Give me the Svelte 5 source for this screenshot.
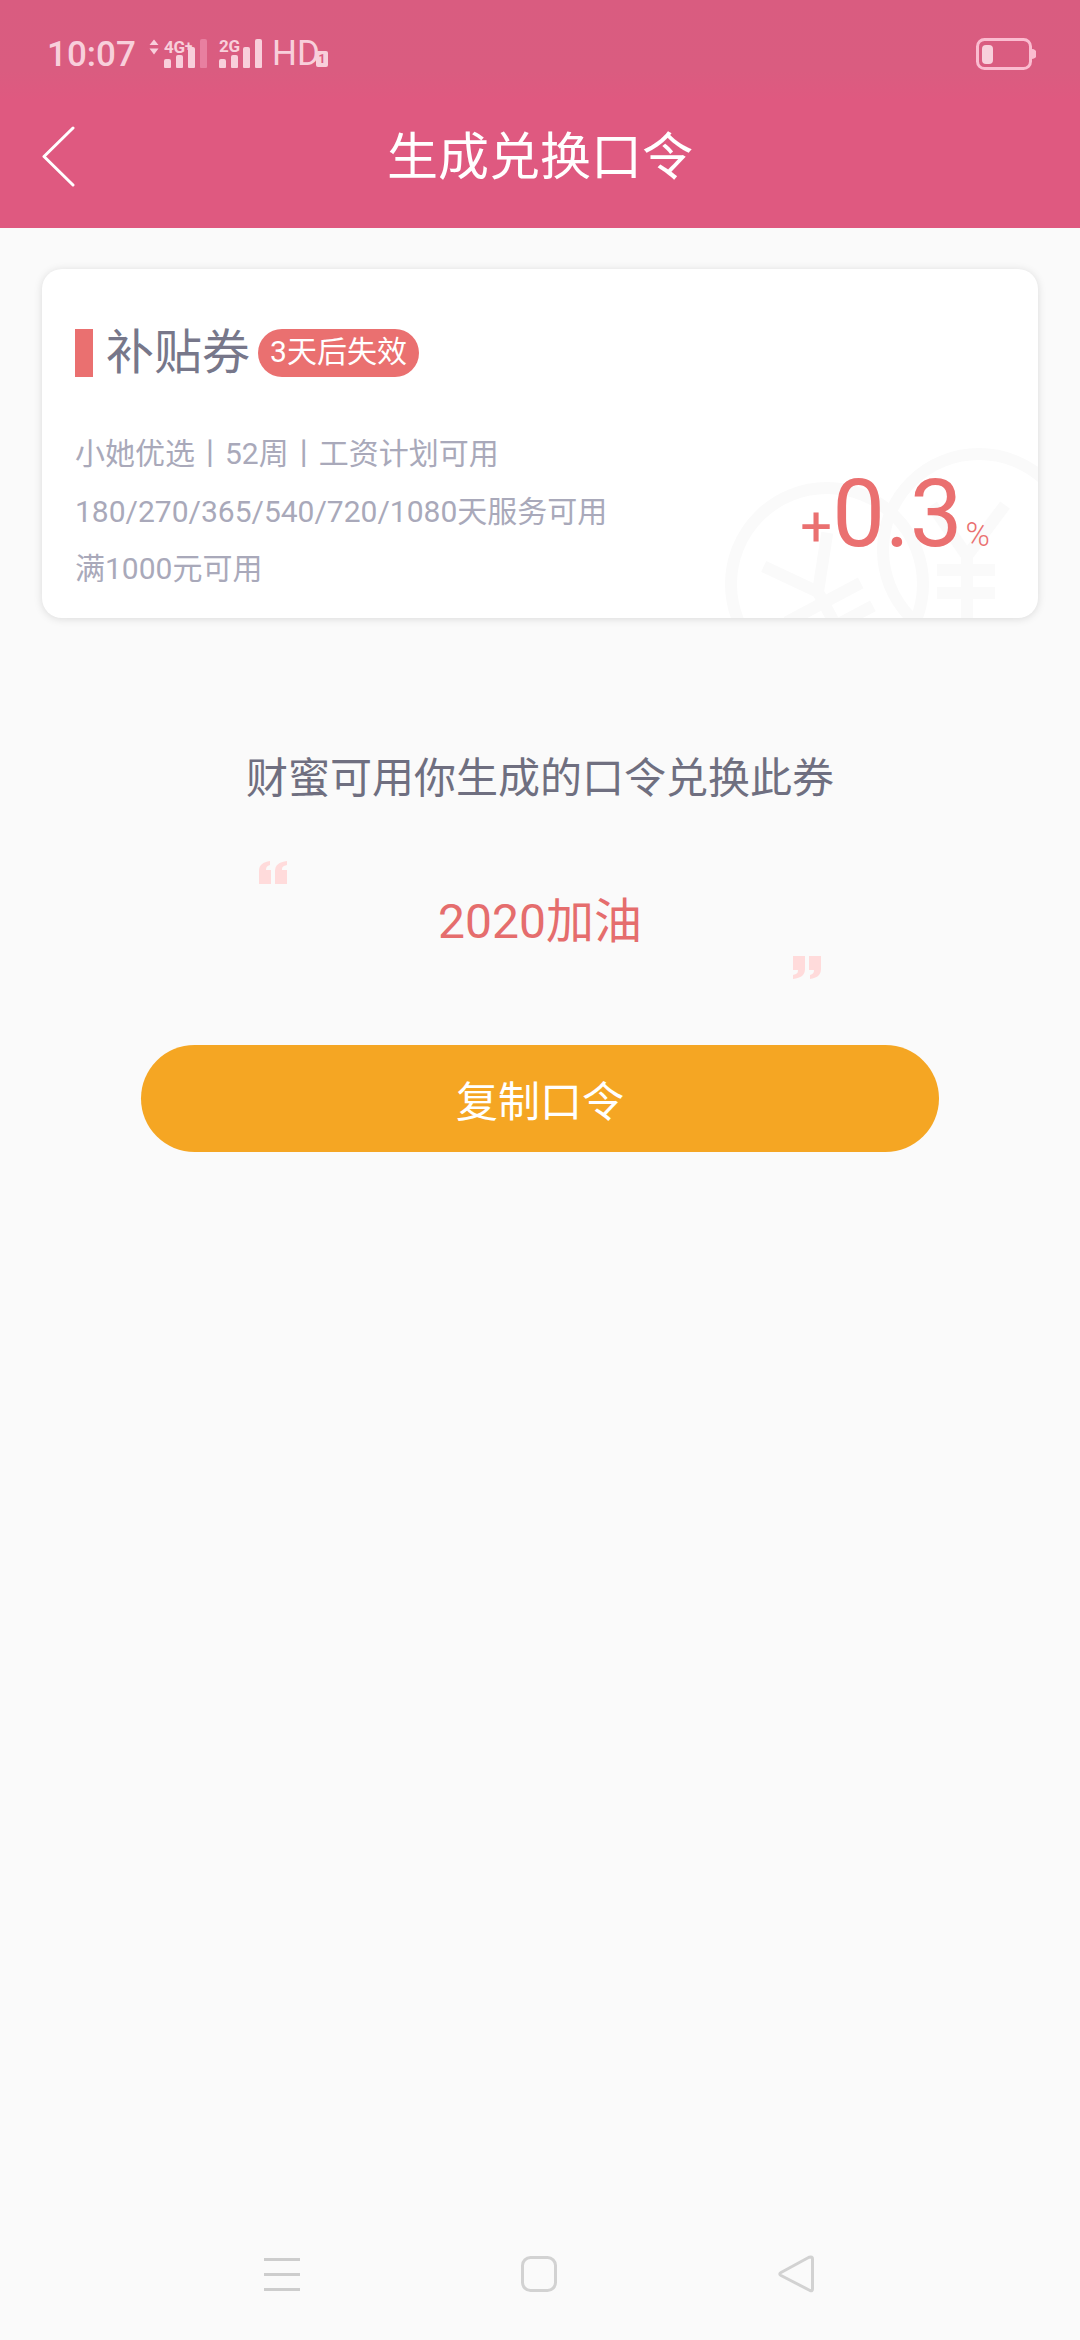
<script>
  const details = ['小她优选丨52周丨工资计划可用', '180/270/365/540/720/1080天服务可用', '满1000元可用'];
</script>

<div class="page">
  <header class="header">
    <div class="status">
      <span class="time">10:07</span>
      <svg class="sig1" width="10" height="16" viewBox="0 0 10 16">
        <path d="M5 0.500 L9.500 6 H0.500Z M5 15.500 L9.500 9.500 H0.500Z" fill="#f8cfdb"/>
      </svg>
      <div class="cell">
        <span class="net">4G<i>+</i></span>
        <div class="bars">
          <b class="b1"></b><b class="b2"></b><b class="b3"></b><b class="b4 dim"></b>
        </div>
      </div>
      <div class="cell second">
        <span class="net">2G</span>
        <div class="bars">
          <b class="b1"></b><b class="b2"></b><b class="b3"></b><b class="b4"></b>
        </div>
      </div>
      <span class="hd">HD</span>
      <span class="sim">1</span>
      <svg class="battery" width="60" height="34" viewBox="0 0 60 34">
        <rect x="1.500" y="1.500" width="53" height="29" rx="7" fill="none" stroke="#fbbcd0" stroke-width="3"/>
        <rect x="6" y="7" width="11" height="19" rx="4" fill="#f8d0dc"/>
        <path d="M56 11 a5 5 0 0 1 0 10Z" fill="#fbbcd0"/>
      </svg>
    </div>
    <div class="bar">
      <svg class="back" width="34" height="62" viewBox="0 0 34 62">
        <path d="M31 2 L2 30.500 L31 59" fill="none" stroke="#fff" stroke-width="3" stroke-linecap="round" stroke-linejoin="round"/>
      </svg>
      <h1>生成兑换口令</h1>
    </div>
  </header>

  <section class="card">
    <svg class="mark" viewBox="42 269 996 349" aria-hidden="true">
      <g fill="none" stroke="#fafafa" stroke-width="12">
        <circle cx="827" cy="584" r="96"/>
        <circle cx="979" cy="550" r="96"/>
        <g transform="rotate(-28 818 592)">
          <path d="M782 544 L818 592 L854 544 M818 592 V670 M776 604 H860 M776 630 H860"/>
        </g>
        <path d="M1005 505 L967 556 L932 505 M967 556 V620 M937 570 H995 M937 593 H995"/>
      </g>
    </svg>
    <div class="head">
      <i class="flag"></i>
      <span class="name">补贴券</span>
      <span class="badge">3天后失效</span>
    </div>
    <div class="body">
      <div class="lines">
        {#each details as line}
          <p>{line}</p>
        {/each}
      </div>
      <div class="value"><span class="plus">+</span><span class="num">0.3</span><span class="pct">%</span></div>
    </div>
  </section>

  <p class="prompt">财蜜可用你生成的口令兑换此券</p>

  <div class="code">
    <svg class="q" width="28" height="23" viewBox="0 0 28 23">
      <path d="M0 23 V10 C0 4 4 1 11 0 V4 C8 5 7 6 7 9 H12 V23Z M16 23 V10 C16 4 20 1 28 0 V4 C24 5 23 6 23 9 H28 V23Z" fill="#ffdbdb"/>
    </svg>
    <p class="word">2020加油</p>
    <svg class="q end" width="28" height="23" viewBox="0 0 28 23">
      <path d="M28 0 V13 C28 19 24 22 17 23 V19 C20 18 21 17 21 14 H16 V0Z M12 0 V13 C12 19 8 22 0 23 V19 C4 18 5 17 5 14 H0 V0Z" fill="#ffdbdb"/>
    </svg>
  </div>

  <button class="copy">复制口令</button>

  <nav class="nav">
    <svg width="36" height="36" viewBox="0 0 36 36">
      <path d="M0 3.500 H36 M0 18.500 H36 M0 33.500 H36" stroke="#cdcdcd" stroke-width="3" fill="none"/>
    </svg>
    <svg width="36" height="36" viewBox="0 0 36 36">
      <rect x="1.500" y="1.500" width="33" height="33" rx="8" fill="none" stroke="#d2d2d2" stroke-width="3"/>
    </svg>
    <svg width="36" height="40" viewBox="0 0 36 40">
      <path d="M33 3 Q34.500 3 34.500 5 V35 Q34.500 37.500 32 36.500 L3 21.500 Q0.500 20 3 18.500 L31 3.300Z" fill="none" stroke="#d2d2d2" stroke-width="3" stroke-linejoin="round"/>
    </svg>
  </nav>
</div>

<style>
  :global(body) {
    margin: 0;
    background: #fafafa;
  }
  .page {
    width: 1080px;
    min-height: 2340px;
    display: flex;
    flex-direction: column;
    font-family: Roboto, "Noto Sans CJK SC", sans-serif;
    background: #fafafa;
  }
  .header {
    height: 228px;
    background: linear-gradient(#d95c80 0, #da5c80 70px, #df5980 100px);
    color: #fff;
  }
  .status {
    height: 84px;
    display: flex;
    align-items: flex-start;
    padding: 36px 44px 0 47px;
    box-sizing: border-box;
    color: #f8cfdb;
  }
  .time {
    font-size: 35px;
    line-height: 38px;
    font-weight: 500;
    width: 102px;
  }
  .sig1 {
    margin: 3px 5px 0 0;
  }
  .cell {
    width: 55px;
    height: 33px;
    position: relative;
  }
  .second {
    width: 53px;
  }
  .net {
    display: block;
    font-size: 17px;
    line-height: 15px;
    font-weight: 700;
    margin-top: 3px;
    letter-spacing: -0.3px;
  }
  .net i {
    font-style: normal;
    font-size: 14px;
    vertical-align: 2px;
  }
  .bars {
    position: absolute;
    left: 0;
    bottom: 1px;
    display: flex;
    align-items: flex-end;
    gap: 5px;
  }
  .bars b {
    display: block;
    width: 7px;
    border-radius: 2px 2px 1px 1px;
    background: #f8cfdb;
  }
  .b1 { height: 9px; }
  .b2 { height: 13px; }
  .b3 { height: 21px; }
  .b4 { height: 29px; }
  .bars .dim { background: #e87fa0; }
  .hd {
    font-size: 35px;
    line-height: 36px;
    width: 44px;
  }
  .sim {
    margin-top: 15px;
    width: 12px;
    height: 16px;
    background: #f8cfdb;
    border-radius: 2px;
    color: #dc5b80;
    font-size: 12px;
    line-height: 16px;
    font-weight: 700;
    text-align: center;
  }
  .battery {
    margin-left: auto;
    margin-top: 2px;
  }
  .bar {
    height: 144px;
    position: relative;
    display: flex;
    align-items: center;
    justify-content: center;
  }
  .back {
    position: absolute;
    left: 42px;
    top: 42px;
  }
  h1 {
    margin: 4px 0 0;
    font-size: 51px;
    line-height: 60px;
    font-weight: 400;
    color: #fff;
  }
  .card {
    position: relative;
    margin: 41px 42px 0;
    height: 349px;
    box-sizing: border-box;
    padding: 60px 48px 0 33px;
    background: #fff;
    border-radius: 20px;
    box-shadow: 0 1px 8px rgba(0, 0, 0, 0.13);
  }
  .mark {
    position: absolute;
    inset: 0;
    width: 100%;
    height: 100%;
    border-radius: 20px;
  }
  .head {
    position: relative;
    display: flex;
    align-items: center;
    height: 48px;
  }
  .flag {
    width: 18px;
    height: 48px;
    background: #ea7070;
  }
  .name {
    margin-left: 13px;
    font-size: 48px;
    line-height: 48px;
    color: #77778a;
  }
  .badge {
    margin-left: 8px;
    height: 48px;
    padding: 0 12px;
    border-radius: 24px;
    background: #ea7070;
    color: #fff;
    font-size: 30px;
    line-height: 46px;
  }
  .body {
    position: relative;
    display: flex;
    justify-content: space-between;
    align-items: flex-start;
    margin-top: 48px;
  }
  .lines p {
    margin: 0;
    font-size: 30px;
    line-height: 57.500px;
    color: #a9a9ba;
    white-space: nowrap;
  }
  .value {
    display: flex;
    align-items: baseline;
    margin-top: 39px;
    color: #ea7070;
    line-height: 100px;
  }
  .plus {
    font-size: 56px;
  }
  .num {
    font-size: 94px;
  }
  .pct {
    margin-left: 3px;
    font-size: 33px;
    font-weight: 300;
  }
  .prompt {
    margin: 131px 0 0;
    text-align: center;
    font-size: 42px;
    line-height: 60px;
    color: #6f6f80;
  }
  .code {
    width: 562px;
    margin: 52px auto 0;
    display: flex;
    flex-direction: column;
  }
  .q {
    display: block;
  }
  .q.end {
    align-self: flex-end;
  }
  .word {
    margin: 8px 0 4px;
    text-align: center;
    font-size: 48px;
    line-height: 60px;
    color: #e56d6d;
  }
  .copy {
    display: block;
    width: 798px;
    height: 107px;
    margin: 66px auto 0;
    padding: 0;
    border: 0;
    border-radius: 54px;
    background: #f5a623;
    color: #fff;
    font-family: inherit;
    font-size: 42px;
  }
  .nav {
    margin-top: auto;
    height: 132px;
    box-sizing: border-box;
    padding: 0 266px 0 264px;
    display: flex;
    align-items: center;
    justify-content: space-between;
  }
</style>
